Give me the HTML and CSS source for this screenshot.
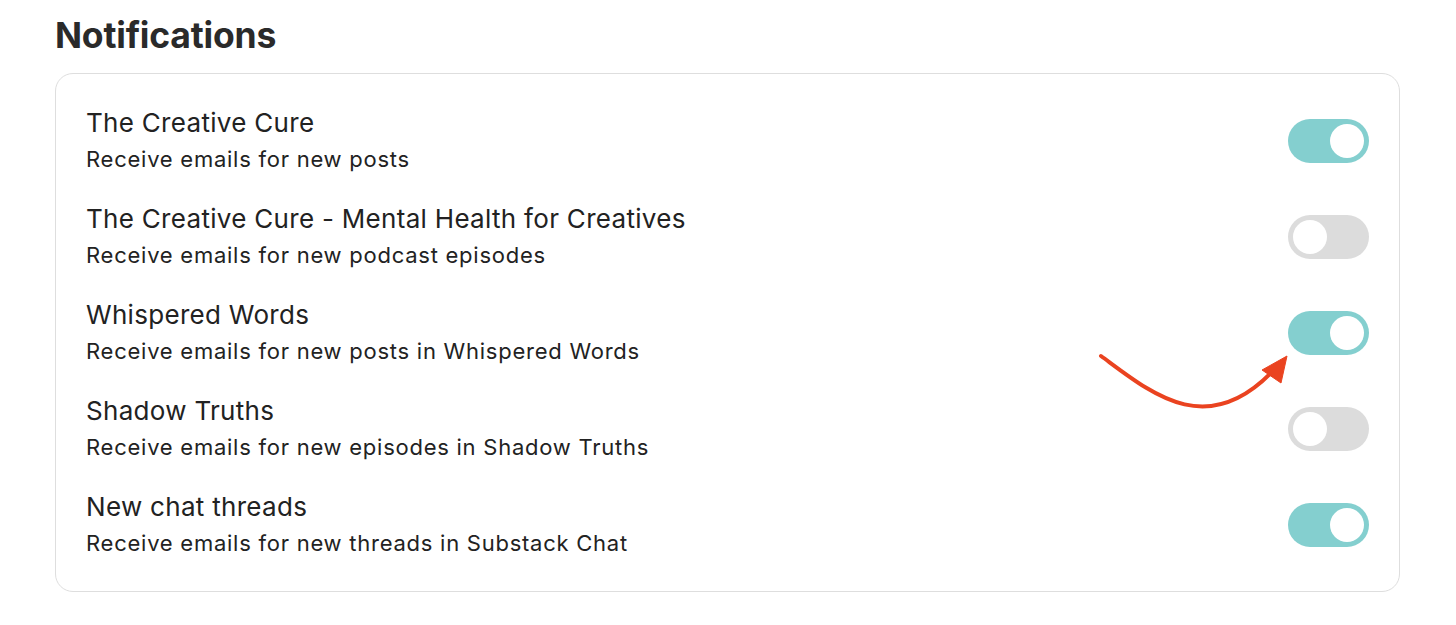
FILE: index.html
```html
<!DOCTYPE html>
<html>
<head>
<meta charset="utf-8">
<link rel="stylesheet" href="styles.css">
</head>
<body>
<div class="page">
  <h1 class="heading">Notifications</h1>
  <div class="card">
    <div class="row">
      <div class="text"><div class="title">The Creative Cure</div><div class="sub">Receive emails for new posts</div></div>
      <div class="toggle on"><span class="knob"></span></div>
    </div>
    <div class="row">
      <div class="text"><div class="title">The Creative Cure - Mental Health for Creatives</div><div class="sub">Receive emails for new podcast episodes</div></div>
      <div class="toggle"><span class="knob"></span></div>
    </div>
    <div class="row">
      <div class="text"><div class="title">Whispered Words</div><div class="sub">Receive emails for new posts in Whispered Words</div></div>
      <div class="toggle on"><span class="knob"></span></div>
    </div>
    <div class="row">
      <div class="text"><div class="title">Shadow Truths</div><div class="sub">Receive emails for new episodes in Shadow Truths</div></div>
      <div class="toggle"><span class="knob"></span></div>
    </div>
    <div class="row">
      <div class="text"><div class="title">New chat threads</div><div class="sub">Receive emails for new threads in Substack Chat</div></div>
      <div class="toggle on"><span class="knob"></span></div>
    </div>
  </div>
  <svg class="arrow" width="1456" height="625" viewBox="0 0 1456 625">
    <path d="M1101 356 C1150 392 1205 440 1271 373" fill="none" stroke="#ea4320" stroke-width="4" stroke-linecap="round"/>
    <path d="M1287 356 L1262 370 L1281 383 Z" fill="#ea4320" stroke="#ea4320" stroke-width="1" stroke-linejoin="round"/>
  </svg>
</div>
</body>
</html>
```
FILE: styles.css
```css
* { box-sizing: border-box; }
html, body { margin: 0; padding: 0; background: #fff; }
body { font-family: Inter, "Open Sans", sans-serif; color: #222; }
.page { position: relative; width: 1456px; height: 625px; padding: 12px 56px 0 55px; }
.heading { margin: 0; font-size: 35.5px; line-height: 48px; font-weight: 700; color: #2a2a2a; letter-spacing: -0.2px; }
.card { margin-top: 13px; width: 1345px; border: 1.5px solid #dedede; border-radius: 18px; padding: 19px 30px 18px 30px; }
.row { height: 96px; display: flex; align-items: center; justify-content: space-between; }
.title { font-size: 26px; line-height: 36px; color: #222; letter-spacing: 0.3px; }
.sub { font-size: 22px; line-height: 37px; color: #222; letter-spacing: 0.75px; }
.toggle { width: 81px; height: 44px; border-radius: 22px; background: #dcdcdc; position: relative; }
.toggle.on { background: #84cfcf; }
.knob { position: absolute; top: 5px; left: 5px; width: 34px; height: 34px; border-radius: 50%; background: #fff; }
.toggle.on .knob { left: 42px; }
.arrow { position: absolute; left: 0; top: 0; pointer-events: none; }
```
